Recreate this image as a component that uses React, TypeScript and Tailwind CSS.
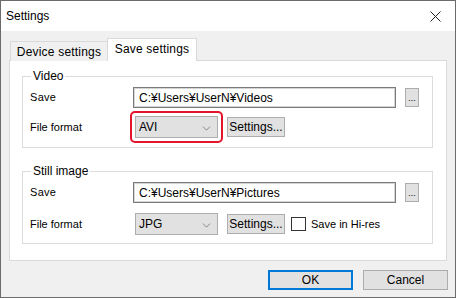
import { ChevronDown } from 'lucide-react';

const ui = { fontFamily: '"Liberation Sans", Arial, sans-serif' };

const Btn = ({ label, className = '' }: { label: string; className?: string }) => (
  <button
    className={`flex items-center justify-center bg-[#e1e1e1] border border-[#adadad] text-[12px] leading-none text-black ${className}`}
  >
    {label}
  </button>
);

const PathRow = ({ path }: { path: string }) => (
  <div className="flex items-center h-[21px]">
    <span className="w-[103px] text-[11px] tracking-[0.3px]">Save</span>
    <div className="w-[263px] h-[21px] flex items-center bg-white border border-[#7a7a7a] shadow-[inset_0_0_0_1px_#d4d4d4] pl-[5px] text-[12px]">
      {path}
    </div>
    <Btn label="..." className="ml-[9px] w-[14px] h-[19px] !text-[9px] !items-end pb-[3px]" />
  </div>
);

const Combo = ({ value }: { value: string }) => (
  <div className="w-[83px] h-[22px] flex items-center justify-between bg-[#e1e1e1] border border-[#adadad] pl-[3px] pr-[4px] text-[12px]">
    <span>{value}</span>
    <ChevronDown className="w-[13px] h-[13px] mt-[2px] text-[#555]" strokeWidth={1.2} />
  </div>
);

const Group = ({ title, children, className = '' }: { title: string; children: React.ReactNode; className?: string }) => (
  <fieldset className={`border border-[#dcdcdc] pl-[7px] ${className}`}>
    <legend className="ml-[1px] px-[2px] text-[12px] leading-[14px]">{title}</legend>
    {children}
  </fieldset>
);

export default function App() {
  return (
    <div style={ui} className="w-[456px] h-[298px] flex flex-col bg-[#f0f0f0] border border-[#6b6b6b] text-black overflow-hidden">
      <div className="h-[30px] shrink-0 bg-white flex items-center justify-between pl-[5px] pr-[14px]">
        <span className="text-[12px]">Settings</span>
        <svg width="11" height="11" viewBox="0 0 11 11">
          <path d="M0.5 0.5L10.5 10.5M10.5 0.5L0.5 10.5" stroke="#222" strokeWidth="1" />
        </svg>
      </div>

      <div className="flex flex-col px-[8px] pt-[7px]">
        <div className="flex items-end h-[23px] pl-[1px] -mb-[1px] relative z-10">
          <div className="w-[97px] h-[20px] flex items-center justify-center border border-r-0 border-b-0 border-[#d9d9d9] bg-[#f0f0f0] text-[12px] tracking-[0.2px]">
            Device settings
          </div>
          <div className="w-[90px] h-[23px] flex items-center justify-center border border-b-0 border-[#d9d9d9] bg-white text-[12px] tracking-[0.2px] pb-[2px]">
            Save settings
          </div>
        </div>

        <div className="w-[438px] bg-white border border-[#d9d9d9] pt-[8px] pl-[12px] pr-[13px] pb-[16px]">
          <Group title="Video" className="pb-[9px]">
            <div className="mt-[4px]">
              <PathRow path="C:¥Users¥UserN¥Videos" />
            </div>
            <div className="flex items-center h-[22px] mt-[8px]">
              <span className="w-[105px] text-[11px]">File format</span>
              <div className="relative">
                <Combo value="AVI" />
                <div className="absolute -inset-[5px] border-2 border-[#e3142c] rounded-[5px] pointer-events-none" />
              </div>
              <Btn label="Settings..." className="ml-[9px] w-[58px] h-[20px]" />
            </div>
          </Group>

          <Group title="Still image" className="mt-[16px] pb-[8px]">
            <div className="mt-[4px]">
              <PathRow path="C:¥Users¥UserN¥Pictures" />
            </div>
            <div className="flex items-center h-[22px] mt-[10px]">
              <span className="w-[105px] text-[11px]">File format</span>
              <Combo value="JPG" />
              <Btn label="Settings..." className="ml-[9px] w-[58px] h-[20px]" />
              <div className="ml-[6px] w-[15px] h-[14px] bg-white border border-[#333]" />
              <span className="ml-[5px] text-[11px]">Save in Hi-res</span>
            </div>
          </Group>
        </div>

        <div className="flex justify-end gap-[10px] mt-[9px]">
          <Btn label="OK" className="w-[85px] h-[20px] !border-[#0078d7] shadow-[inset_0_0_0_1px_#0078d7]" />
          <Btn label="Cancel" className="w-[85px] h-[20px] -mr-[1px]" />
        </div>
      </div>
    </div>
  );
}
